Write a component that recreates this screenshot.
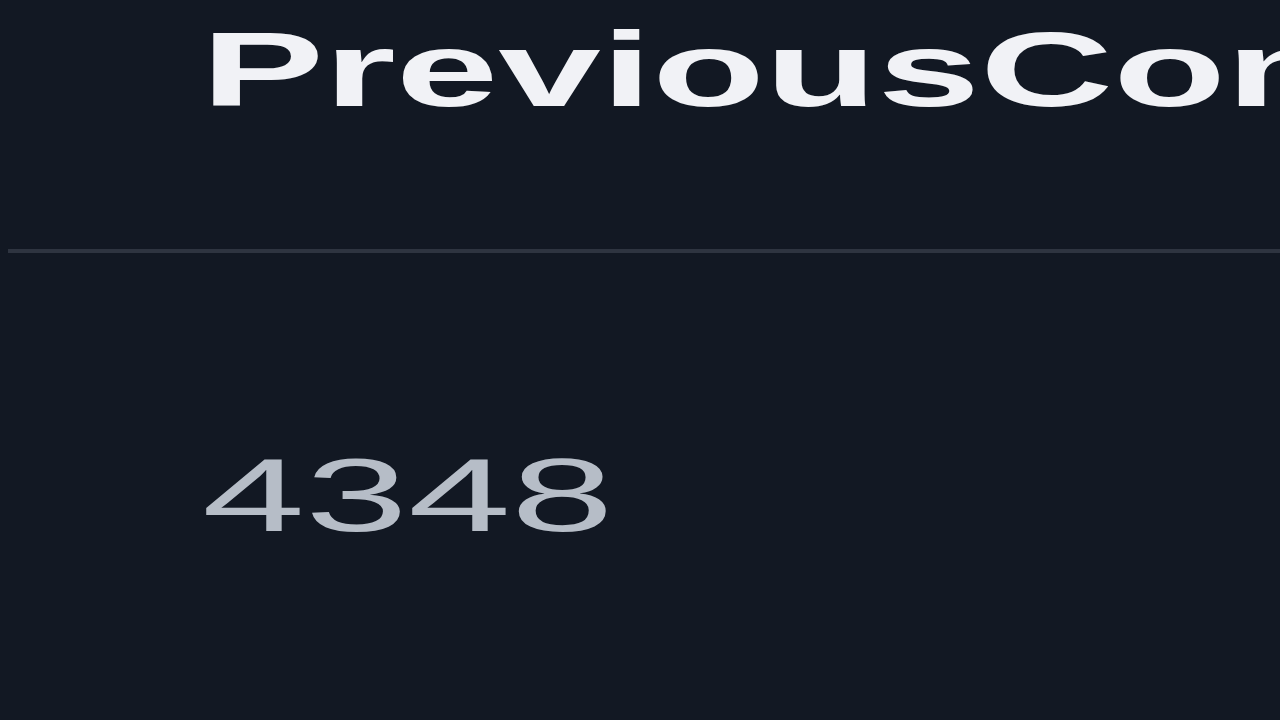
import React from "react";

export default function App() {
	return (
		<div className="h-[720px] w-[1280px] overflow-hidden bg-[#121823] font-['Liberation_Sans',Arial,sans-serif]">
			<div className="pt-[16px] pl-[201px] whitespace-nowrap">
				<h1 className="inline-block origin-left scale-x-[1.74] text-[106px] font-bold leading-none text-[#f1f2f6]">
					PreviousContests
				</h1>
			</div>
			<div className="mt-[127px] ml-[8px] h-[4px] bg-[#2e3440]" />
			<div className="mt-[190px] pl-[202px] whitespace-nowrap">
				<span className="inline-block origin-left scale-x-[1.78] text-[104px] font-normal leading-none text-[#b6bdc7]">
					4348
				</span>
			</div>
		</div>
	);
}
